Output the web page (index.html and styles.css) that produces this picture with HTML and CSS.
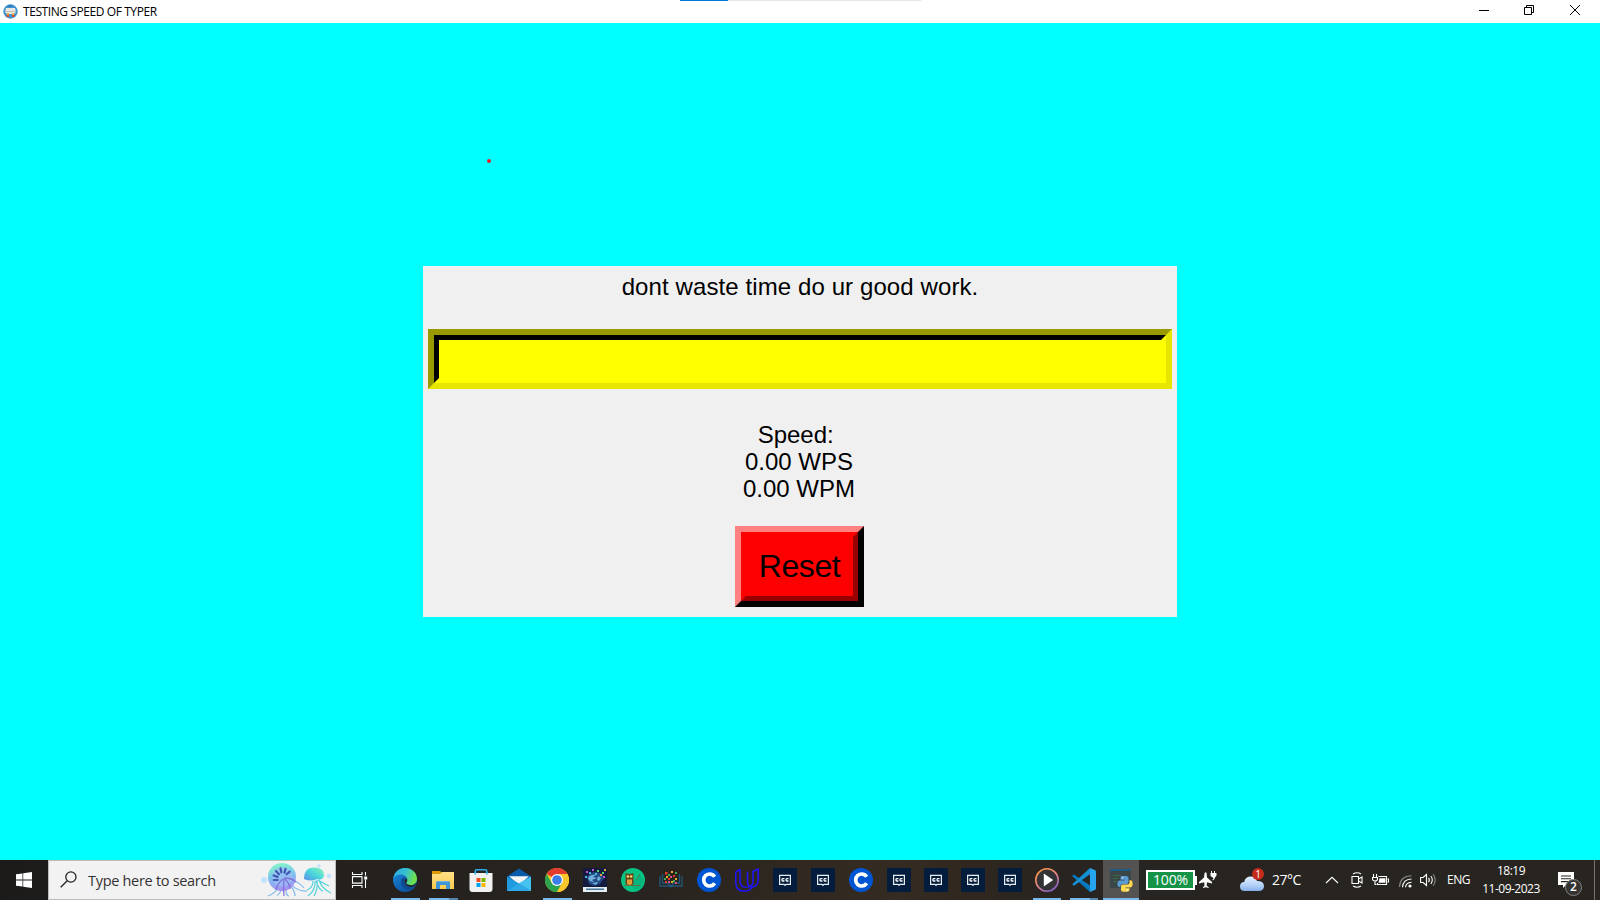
FILE: index.html
```html
<!DOCTYPE html>
<html lang="en">
<head>
<meta charset="utf-8">
<title>TESTING SPEED OF TYPER</title>
<link rel="stylesheet" href="styles.css">
</head>
<body>
<svg class="defs" width="0" height="0" aria-hidden="true">
  <defs>
    <linearGradient id="edgeA" x1="0" y1="0" x2="1" y2="0.3"><stop offset="0" stop-color="#2aa7e0"/><stop offset=".55" stop-color="#35c1d0"/><stop offset="1" stop-color="#6ee04c"/></linearGradient>
    <linearGradient id="edgeB" x1="0" y1="0" x2="0.5" y2="1"><stop offset="0" stop-color="#1d8fdc"/><stop offset="1" stop-color="#0c55a5"/></linearGradient>
    <linearGradient id="play" x1="0" y1="0" x2="0.6" y2="1"><stop offset="0" stop-color="#f7953a"/><stop offset=".5" stop-color="#ee8a77"/><stop offset="1" stop-color="#9064c8"/></linearGradient>
    <linearGradient id="jelly" x1="0.4" y1="0" x2="0.6" y2="1"><stop offset="0" stop-color="#86f5c8"/><stop offset=".45" stop-color="#7cc4ee"/><stop offset="1" stop-color="#a98af0"/></linearGradient>
    <linearGradient id="jelly2" x1="0" y1="1" x2="1" y2="0"><stop offset="0" stop-color="#5a8ee8"/><stop offset=".5" stop-color="#4ad7dc"/><stop offset="1" stop-color="#93f3b4"/></linearGradient>
    <linearGradient id="cloud" x1="0" y1="0" x2="0" y2="1"><stop offset="0" stop-color="#e2efff"/><stop offset=".6" stop-color="#b4d2f8"/><stop offset="1" stop-color="#84aeea"/></linearGradient>
    <linearGradient id="folder" x1="0" y1="0" x2="0" y2="1"><stop offset="0" stop-color="#ffe08a"/><stop offset="1" stop-color="#fbc94c"/></linearGradient>
    <symbol id="cc" viewBox="0 0 24 24">
      <path fill="#051d3d" d="M0 0h24v24H0z"/>
      <path fill="none" stroke="#e8edf4" stroke-width="1.2" d="M6.6 7.3h10.8v9H13l-1 1-1-1H6.6z"/>
      <path fill="none" stroke="#fff" stroke-width="1.3" d="M11.4 10.6H9.8q-.9 0-.9 1.2t.9 1.2h1.6M15.5 10.6h-1.6q-.9 0-.9 1.2t.9 1.2h1.6"/>
    </symbol>
    <symbol id="coursera" viewBox="0 0 24 24">
      <circle cx="12" cy="12" r="12" fill="#0056d2"/>
      <path fill="none" stroke="#fff" stroke-width="3.7" d="M17.7 8.7A6 6 0 1 0 17.7 15.3"/>
    </symbol>
  </defs>
</svg>

<header class="titlebar">
  <svg class="app-icon" viewBox="0 0 15 15">
    <circle cx="7.5" cy="7.5" r="7.2" fill="#3f93d0"/>
    <path fill="#2e7bb8" d="M5 1h4v2H5z"/>
    <path fill="#e9e7e2" d="M3 4h9l1 4-2 2H4L2 8z"/>
    <path fill="#c3bdb8" d="M2 7h11v1H2z"/>
    <path fill="#f6b13a" d="M4 9h2v2H4zM9 9h2v2H9z"/>
    <path fill="#e24a35" d="M3 11h3v2H4zM9 11h3l-1 2H9z"/>
  </svg>
  <h1 class="title">TESTING SPEED OF TYPER</h1>
  <div class="progress"><div class="progress-fill"></div></div>
  <div class="controls">
    <svg viewBox="0 0 12 12"><path d="M1 6.5h10"/></svg>
    <svg viewBox="0 0 12 12"><path d="M1.500 3.500h7v7h-7zM3.500 3.500v-2h7v7h-2"/></svg>
    <svg viewBox="0 0 12 12"><path d="M1 1l10 10M11 1L1 11"/></svg>
  </div>
</header>

<main class="stage">
  <span class="dot"></span>
  <section class="panel">
    <p class="sentence">dont waste time do ur good work.</p>
    <div class="entry"><div class="entry-inner"></div></div>
    <p class="speed">Speed:&nbsp;<br>0.00 WPS<br>0.00 WPM</p>
    <div class="reset"><div class="reset-inner">Reset</div></div>
  </section>
</main>

<footer class="taskbar">
  <div class="start"><svg width="16" height="16" viewBox="0 0 16 16"><path fill="#fff" d="M0 2.3l6.500-.9v6.200H0zM7.200 1.300L16 0v7.600H7.200zM0 8.400h6.500v6.200L0 13.700zM7.200 8.400H16V16l-8.800-1.200z"/></svg></div>
  <div class="search">
    <svg class="lens" width="17" height="17" viewBox="0 0 17 17"><circle cx="10.900" cy="6" r="5.100"/><path d="M7.200 9.700L.7 16.200"/></svg>
    <span class="search-text">Type here to search</span>
    <svg class="jellyfish" width="72" height="36" viewBox="0 0 72 36">
      <g fill="#c5e2fb"><circle cx="3" cy="18" r="3"/><circle cx="58" cy="4" r="1.800"/><circle cx="68" cy="14" r="2.200"/></g>
      <g fill="none" stroke="#80b9ec" stroke-width="1.200">
        <path d="M22 20Q14 32 7 34M24 20Q18 34 16 33M25 20Q24 34 28 34M26 19Q34 28 34 34M26 18Q35 30 46 29M26 17Q38 19 43 26"/>
        <path stroke="#56d3dc" d="M52 19Q52 26 46 28M54 19Q55 28 47 34M56 18Q57 28 53 34M58 18Q61 27 70 31M57 18Q62 21 68 24M55 19Q58 28 62 29"/>
      </g>
      <circle cx="21" cy="15" r="14" fill="url(#jelly)"/>
      <circle cx="21.500" cy="15" r="10" fill="#9bc0f4" opacity=".65"/>
      <g stroke="#4258b4" stroke-width="2.200" stroke-linecap="round"><path d="M12.800 18h4M12.600 13.500l4 1.400M15 9l3 3.200M19.500 6.300l.8 4M24.500 6.800l-1 3.800M28.700 9.600l-3 2.700"/></g>
      <path fill="none" stroke="#8271dc" stroke-width="1.300" d="M22 17Q16 22 15 28M23 17Q22 26 23 34M24 17Q29 22 29 27M23 16Q31 16 35 20"/>
      <path fill="url(#jelly2)" d="M43 17Q43 5 54 5.500Q64 6 63 14Q61 19 56 17Q50 20 43 17z"/>
    </svg>
  </div>
  <div class="taskview"><svg width="17" height="16" viewBox="0 0 17 16"><path fill="none" stroke="#fff" stroke-width="1.100" d="M1.500 0v2.500h9.500V0M1.500 4.600h9.500v6.500H1.500zM1.500 16v-2.500h9.500V16M14.500 0v3.500M14.500 7.500V16"/><path fill="#fff" d="M13.200 4.500h3v3h-3z"/></svg></div>

  <nav class="apps">
    <div class="app open"><svg viewBox="0 0 24 24">
      <circle cx="12" cy="12" r="12" fill="url(#edgeB)"/>
      <path fill="url(#edgeA)" d="M.3 10.500C1.500 4 6.300 0 12 0c7 0 12 5 12 10.800 0 4-3 6.300-6.200 6.300-3 0-4.600-1.100-4.600-2 0-.8 1.200-1.200 1.200-3.300 0-2.900-3-5.300-6.600-5.300C4.300 6.500 1.500 8.200.3 10.500z"/>
      <path fill="#0d4b92" d="M8.700 10.500C6.500 16 9.500 21 15 22c3-.7 5.500-2.500 6.800-4.500-5 2.500-10.500.5-10.500-4.200 0-1.700.7-2.600 1.500-3.300-1.300-.8-3.300-.6-4.100.5z"/>
      <path fill="#24211e" d="M14.200 12.500c0 1.300-1.100 1.700-1.100 2.600 0 1 1.800 2.200 4.700 2.200 2.600 0 4.500-1 5.600-2.600-.4 1.300-1 2.400-1.800 3.400-4.500 2-10 0-10-4.800 0-1.200.5-2.200 1.200-2.800.8.300 1.400 1.100 1.400 2z"/>
    </svg></div>
    <div class="app open stacked"><svg viewBox="0 0 24 24">
      <path fill="#dc9908" d="M1 3h8l2 2v4H1z"/><path fill="url(#folder)" d="M1 6h8l2-2h12v17H1z"/>
      <path fill="#3f97d8" d="M5 21v-6q0-2 2-2h10q2 0 2 2v6h-4v-4H9v4z"/><path fill="#65b5e8" d="M7 13h10v1H7z"/>
    </svg></div>
    <div class="app store"><svg viewBox="0 0 24 24">
      <path fill="none" stroke="#2cabea" stroke-width="1.600" d="M6.300 7V3q0-1.200 1.200-1.200h9q1.200 0 1.200 1.200v4"/>
      <path fill="#f1f1f1" d="M.5 5h23v16q0 3-3 3h-17q-3 0-3-3z"/>
      <path stroke="#2cabea" stroke-width="1.600" d="M6.300 4v2.500M17.700 4v2.500"/>
      <path fill="#f14f21" d="M7.500 10h4v4h-4z"/><path fill="#7eb900" d="M12.500 10h4v4h-4z"/><path fill="#00a3ee" d="M7.500 15h4v4h-4z"/><path fill="#feb800" d="M12.500 15h4v4h-4z"/>
    </svg></div>
    <div class="app"><svg viewBox="0 0 24 24">
      <path fill="#0a5cab" d="M0 8.500L12 .5l12 8V12H0z"/><path fill="#f5f5f5" d="M2 8.300h20L12 17z"/>
      <path fill="#1f99e0" d="M0 8.500l12 7 12-7V23H0z"/><path fill="#45c2f0" d="M24 8.500V23L9 13.800l3 1.700z"/><path fill="#2eaae8" d="M0 23l12-7.500L24 23z"/>
    </svg></div>
    <div class="app open"><svg viewBox="0 0 24 24">
      <circle cx="12" cy="12" r="12" fill="#fcc72d"/>
      <path fill="#e33b2e" d="M12 12L1.600 6A12 12 0 0 1 22.400 6H12z"/><path fill="#2ba24c" d="M1.600 6A12 12 0 0 0 12 24l5.200-9L12 12 6.800 15z"/>
      <path fill="#fcc72d" d="M12 6h10.400A12 12 0 0 1 12 24l5.200-9z"/>
      <circle cx="12" cy="12" r="6" fill="#fff"/><circle cx="12" cy="12" r="4.800" fill="#3b7de9"/>
    </svg></div>
    <div class="app"><svg viewBox="0 0 24 24">
      <path fill="#151b3e" d="M0 0h24v24H0z"/><path fill="#234a84" d="M4 9q3-5 9-5 7 1 8 6l-4 6-6 2-5-2z"/><path fill="#6fb0dc" d="M5 10q3-4 8-3l-3 2 4 1-5 2 2 2q-5 0-6-4zM15 8l3 2-2 3-2-1zM9 15l6-1-2 3z"/>
      <path fill="#bd52d2" d="M3 3h2v2H3zM9 1h2v2H9zM20 8h2v2h-2z"/><path fill="#4fd26c" d="M14 2h2v2h-2zM19 4h2v2h-2z"/><path fill="#e5a340" d="M17 6h2v2h-2zM21 1h2v2h-2z"/><path fill="#42b9dd" d="M6 4h2v2H6zM2 8h2v2H2zM12 5h2v2h-2z"/>
      <path fill="#e4eef2" d="M0 19h24v5H0z"/><path fill="#47799a" d="M3 20.500h18v1.500H3z"/>
    </svg></div>
    <div class="app"><svg viewBox="0 0 24 24">
      <circle cx="12" cy="12" r="12" fill="#06c584"/><path fill="#089b70" d="M10 18l8-11 5 5q0 7-7 10z" opacity=".35"/>
      <path fill="#6c421b" d="M4.500 5l2 .8h4l2-.8v10q-1 3-4 3t-4-3z"/><path fill="#e59a35" d="M6 11.500h5v4q-.7 1.500-2.500 1.500T6 15.500z"/><circle cx="6.900" cy="8.500" r="1.300" fill="#ffd56c"/><circle cx="10.100" cy="8.500" r="1.300" fill="#ffd56c"/><path stroke="#60704a" d="M3 17.500h16M19 6l-4 6"/>
    </svg></div>
    <div class="app"><svg viewBox="0 0 24 24">
      <path fill="none" stroke="#205878" stroke-width="1.300" d="M1 8v10h8q3 0 3 1.500Q12 18 15 18h8V8M3.500 6v9H9l3 3 3-3h5.500V6"/>
      <g fill="#e33b2e"><path d="M6 4h2.500v2.500H6zM14 7h2v2h-2zM9 10h2v2H9zM6 13h2v2H6z"/></g><g fill="#e9ad24"><path d="M12 3h2v2h-2zM7 8h2v2H7zM16 10h2v2h-2zM12 13h2v2h-2z"/></g><g fill="#43ac59"><path d="M9 6h2v2H9zM16 4h2v2h-2zM5 10h2v2H5zM14 12h2v2h-2z"/></g><g fill="#d45092"><path d="M11 8h2v2h-2zM9 13h2v2H9zM16 14h2v2h-2z"/></g>
    </svg></div>
    <div class="app"><svg><use href="#coursera"/></svg></div>
    <div class="app"><svg viewBox="0 0 24 24"><path fill="none" stroke="#2015ff" stroke-width="1.500" stroke-linejoin="round" d="M.8 3.800L5 1.500v12.300q0 3.300 2.800 4.800Q9.600 19.700 12.300 19.100M.8 3.800v10.400q0 9 8.700 9 5.500 0 7.500-4.200M12.500 3.800v10q0 5.200 4.800 5.200 5.900-.5 5.900-7.500V.9L18 3.500v10.300q0 4.500-5 5.200"/></svg></div>
    <div class="app"><svg><use href="#cc"/></svg></div>
    <div class="app"><svg><use href="#cc"/></svg></div>
    <div class="app"><svg><use href="#coursera"/></svg></div>
    <div class="app"><svg><use href="#cc"/></svg></div>
    <div class="app narrow"><svg><use href="#cc"/></svg></div>
    <div class="app narrow"><svg><use href="#cc"/></svg></div>
    <div class="app narrow"><svg><use href="#cc"/></svg></div>
    <div class="app narrow open"><svg viewBox="0 0 24 24"><circle cx="12" cy="12" r="11.200" fill="#333234" stroke="url(#play)" stroke-width="1.600"/><path fill="#fff" d="M8.800 6.200q0-.7.700-.3l8 5.500q.8.600 0 1.200l-8 5.500q-.7.400-.7-.3z"/></svg></div>
    <div class="app narrow open stacked"><svg viewBox="0 0 24 24"><path fill="#0879be" d="M1.800 6.600L0 8l18 16 1-6z"/><path fill="#1690d5" d="M.2 16.200l1.700 1.500L19 5.500 18 0z"/><path fill="#27a4ee" d="M18 0l5.300 2.300Q24 2.700 24 3.400v17.200q0 .8-.7 1.100L18 24z"/></svg></div>
    <div class="app active"><svg viewBox="0 0 24 24">
      <path fill="#3b4648" d="M1 1h21v19H1z"/><path fill="#1d5c87" d="M1 1h21v2H1z"/><path stroke="#376b42" d="M4 7.500h8M4 10.500h5M4 13.500h4"/>
      <path fill="#5b9bd3" d="M13 8h4q2.500 0 2.500 2v4q0 2-2 2h-4q-2 0-2 2v1H10q-2-1-1.500-4.500Q9 12.500 11 12.500h4.500v-.8H11.500V9.500q0-1.500 1.500-1.500z"/><path fill="#ffda50" d="M20.500 12.200H22q2 .8 1.500 5-.5 2.300-2.500 2.300h-4.500v.8h4v1.500q0 2-2.500 2h-3.500q-2.500 0-2.500-2V18.500q0-2 2-2h4.500q2 0 2-2z"/><circle cx="13.500" cy="9.800" r=".7" fill="#fff"/><circle cx="18.500" cy="22" r=".7" fill="#fff"/>
    </svg></div>
  </nav>

  <div class="battery"><span class="battery-level">100%</span></div>
  <svg class="plane" width="18" height="18" viewBox="0 0 18 18"><path fill="#fff" d="M5.600 2q1.400-1.500 2 .3L8 6.500l5 4.500v1.600l-5-1.400-.3 3.500 2 1.500V17l-3-.7-2.700.7v-.8l1.500-1.500-.3-3.500L0 12.600V11l5-4.500zM12 2V0h1v2h2V0h1v2h1.500v2.500L16 6.500q0 2-2.500 3V8.500q1-.5.900-1.500L11.500 5V2z"/></svg>
  <div class="weather">
    <svg width="24" height="24" viewBox="0 0 24 24"><path fill="url(#cloud)" d="M5 23q-5 0-5-4.500Q0 14.200 4.200 14 5 8.500 11 8.500q4 0 6 4.500 7 0 7 5.200Q24 23 18.500 23z"/><circle cx="18" cy="6" r="6" fill="#c42b1c"/></svg>
    <span class="alert">1</span>
    <span class="temp">27°C</span>
  </div>
  <div class="tray">
    <svg width="14" height="8" viewBox="0 0 14 8"><path d="M1 7l6-5.700L13 7"/></svg>
    <svg class="meet" width="12" height="16" viewBox="0 0 12 16"><path d="M1 4.500h6.500v7H1zM7.500 7L11 5v6L7.500 9M2 2Q6-.5 10 2M2 14q4 2.500 8 0"/></svg>
    <svg class="charge" width="17" height="13" viewBox="0 0 17 13"><path d="M6.500 2.500h8v8h-9V9M15.500 5h1v3h-1M1.500 0v3M4.500 0v3M.5 3.500h5v2Q5 7 3 7T.5 5.500zM3 7v3.500h1.500"/><path class="solid" d="M7.500 4.200h6v4.600h-7z"/></svg>
    <svg class="wifi" width="13" height="13" viewBox="0 0 13 13"><path class="dim" d="M.5 12Q1 1 12.500.8"/><path d="M3.500 12.300Q4 4.300 12.500 4M6.500 12.300Q7 7.600 12.500 7.200"/><circle class="solid" cx="11" cy="11" r="1.600"/></svg>
    <svg class="sound" width="17" height="14" viewBox="0 0 17 14"><path d="M.6 4.500h2.500L6.500 1.500v11L3.100 9.500H.6zM8.500 4.800q1.700 2.200 0 4.400M10.800 3q3 4 0 8"/><path class="dim" d="M13.200 1.200q4 5.800 0 11.600"/></svg>
    <span class="lang">ENG</span>
  </div>
  <div class="clock"><span class="time">18:19</span><span class="date">11-09-2023</span></div>
  <div class="notify">
    <svg width="16" height="16" viewBox="0 0 16 16"><path fill="#fff" d="M0 0h16v13H8l-3 3v-3H0z"/><path stroke="#292521" stroke-width="1.100" d="M3 4h10M3 6.800h10M3 9.600h7"/></svg>
    <span class="count">2</span>
  </div>
</footer>
</body>
</html>
```

FILE: styles.css
```css
* { box-sizing: border-box; }
html, body { height: 100%; }
body {
  margin: 0;
  width: 1600px;
  height: 900px;
  display: flex;
  flex-direction: column;
  overflow: hidden;
  background: #00ffff;
  font-family: "Open Sans", "Noto Sans", sans-serif;
}
p, h1 { margin: 0; font-weight: 400; }
svg { display: block; flex: none; }
.defs { position: absolute; }

.titlebar {
  position: relative;
  flex: none;
  height: 23px;
  display: flex;
  align-items: center;
  background: #fff;
}
.app-icon { width: 15px; height: 15px; margin-left: 2.5px; margin-top: -1px; }
.title {
  margin-left: 5.5px;
  font-size: 12px;
  line-height: 23px;
  letter-spacing: -0.42px;
  color: #000;
  white-space: nowrap;
}
.progress {
  position: absolute;
  top: 0;
  left: 680px;
  width: 241px;
  height: 1px;
  background: #e6e6e6;
}
.progress-fill { width: 48px; height: 1px; background: #0078d7; }
.controls {
  margin-left: auto;
  display: flex;
  gap: 33px;
  padding-right: 19px;
  margin-top: -3px;
}
.controls svg { width: 12px; height: 12px; }
.controls svg:nth-child(2) { margin-right: 1px; }
.controls path { fill: none; stroke: #000; stroke-width: 1; }

.stage {
  position: relative;
  flex: 1;
  padding-top: 243px;
}
.dot {
  position: absolute;
  left: 487px;
  top: 136px;
  width: 4px;
  height: 4px;
  border-radius: 2px;
  background: #ed1c24;
}
.panel {
  width: 754px;
  height: 351px;
  margin: 0 auto;
  padding: 5px;
  display: flex;
  flex-direction: column;
  align-items: center;
  background: #f0f0f0;
  font-family: "Liberation Sans", Arial, sans-serif;
  color: #000;
}
.sentence {
  font-size: 24px;
  line-height: 32px;
  letter-spacing: 0.1px;
  margin-bottom: 26px;
  white-space: nowrap;
}
.entry {
  width: 744px;
  height: 60px;
  border: 6px solid;
  border-color: #999900 #e6e600 #e6e600 #999900;
}
.entry-inner {
  height: 48px;
  border: 5px solid;
  border-color: #000 #ffff00 #ffff00 #000;
  background: #ffff00;
}
.speed {
  margin-top: 32px;
  margin-right: 2px;
  font-size: 24px;
  line-height: 27px;
  text-align: center;
}
.reset {
  margin-top: 24px;
  margin-right: 1px;
  width: 129px;
  height: 81px;
  border: 6px solid;
  border-color: #ff8080 #000 #000 #ff8080;
}
.reset-inner {
  height: 69px;
  border: 5px solid;
  border-color: #ff0000 #990000 #990000 #ff0000;
  background: #ff0000;
  font-size: 32px;
  line-height: 59px;
  letter-spacing: -0.4px;
  text-align: center;
}

.taskbar {
  flex: none;
  height: 40px;
  display: flex;
  align-items: center;
  background: linear-gradient(90deg, #1d1b1a 0, #24211e 380px, #29241f 660px, #352b22 900px, #30271f 960px, #272421 1080px, #282521 1600px);
  color: #fff;
}
.start {
  width: 48px;
  display: flex;
  justify-content: center;
}
.search {
  width: 288px;
  height: 40px;
  display: flex;
  align-items: center;
  background: #f2f2f2;
  border: 1px solid #bdbdbd;
  color: #333;
}
.lens { margin-left: 11px; margin-top: -2px; fill: none; stroke: #222; stroke-width: 1.3; }
.search-text {
  width: 174px;
  margin-left: 11px;
  font-size: 14.5px;
  letter-spacing: -0.3px;
  white-space: nowrap;
}
.jellyfish { margin-left: -1px; }
.taskview {
  width: 50px;
  padding-left: 15px;
  margin-top: -1px;
}
.apps { display: flex; width: 753px; height: 40px; }
.app {
  position: relative;
  flex: none;
  width: 38px;
  height: 40px;
  display: flex;
  align-items: center;
  justify-content: center;
}
.app.narrow { width: 37px; padding-right: 1px; }
.app svg { width: 24px; height: 24px; }
.app.store { padding-right: 1px; }
.app.active { width: 36px; background: #555351; }
.app.open::after, .app.active::after {
  content: "";
  position: absolute;
  left: 5px;
  bottom: 0;
  width: 29px;
  height: 2px;
  background: #76b9ed;
}
.app.narrow.open::after { left: 4px; width: 28px; }
.app.stacked::after { background: linear-gradient(90deg, #76b9ed 20px, #5485ad 20px); }
.app.active::after { left: 0; width: 36px; }

.battery {
  position: relative;
  width: 49px;
  height: 20px;
  margin-left: 7px;
  padding: 2px;
  background: #fff;
}
.battery::after {
  content: "";
  position: absolute;
  right: -2px;
  top: 6px;
  width: 2px;
  height: 9px;
  background: #fff;
}
.battery-level {
  display: block;
  height: 16px;
  background: #159447;
  font-size: 14px;
  line-height: 16px;
  letter-spacing: -0.1px;
  text-align: center;
}
.plane { margin-left: 4px; }
.weather {
  position: relative;
  width: 62px;
  margin-left: 23px;
  display: flex;
  align-items: center;
}
.alert {
  position: absolute;
  left: 15px;
  top: 0;
  width: 6px;
  font-size: 10px;
  line-height: 12px;
  text-align: center;
}
.temp {
  margin-left: 8px;
  margin-top: -1px;
  font-size: 14px;
  letter-spacing: -0.5px;
  white-space: nowrap;
}
.tray {
  display: flex;
  align-items: center;
  margin-left: 23px;
}
.tray svg { fill: none; stroke: #fff; stroke-width: 1.1; }
.tray .solid { fill: #fff; stroke: none; }
.tray .dim { stroke: #8b8987; }
.meet { margin-left: 12px; }
.charge { margin-left: 9px; }
.wifi { margin-left: 10px; margin-top: 2px; }
.sound { margin-left: 8px; }
.lang {
  width: 24px;
  margin-left: 10px;
  margin-top: -2px;
  font-size: 12px;
  letter-spacing: -0.5px;
}
.clock {
  width: 60px;
  margin-left: 10px;
  display: flex;
  flex-direction: column;
  align-items: center;
  font-size: 12px;
  line-height: 18px;
  letter-spacing: -0.5px;
  white-space: nowrap;
}
.notify {
  position: relative;
  width: 37px;
  height: 40px;
  margin-left: 17px;
  padding-top: 12px;
  border-right: 1px solid #77736f;
}
.count {
  position: absolute;
  left: 7px;
  top: 19px;
  width: 17px;
  height: 17px;
  border: 1px solid #858380;
  border-radius: 50%;
  background: #343230;
  font-size: 12px;
  font-weight: 600;
  line-height: 14px;
  text-align: center;
}
```
